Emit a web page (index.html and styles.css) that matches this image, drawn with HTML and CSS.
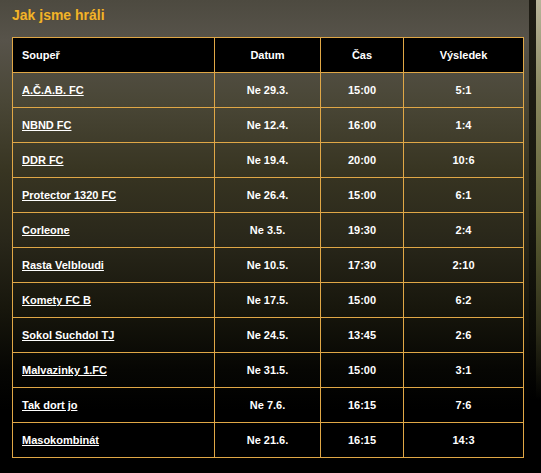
FILE: index.html
```html
<!DOCTYPE html>
<html lang="cs">
<head>
<meta charset="utf-8">
<title>Jak jsme hráli</title>
<link rel="stylesheet" href="styles.css">
</head>
<body>
<div class="page">
  <h2 class="title">Jak jsme hráli</h2>
  <table class="results">
    <colgroup>
      <col class="c-team"><col class="c-date"><col class="c-time"><col class="c-score">
    </colgroup>
    <thead>
      <tr><th class="left">Soupeř</th><th>Datum</th><th>Čas</th><th>Výsledek</th></tr>
    </thead>
    <tbody>
      <tr><td class="left"><a href="#">A.Č.A.B. FC</a></td><td>Ne 29.3.</td><td>15:00</td><td>5:1</td></tr>
      <tr><td class="left"><a href="#">NBND FC</a></td><td>Ne 12.4.</td><td>16:00</td><td>1:4</td></tr>
      <tr><td class="left"><a href="#">DDR FC</a></td><td>Ne 19.4.</td><td>20:00</td><td>10:6</td></tr>
      <tr><td class="left"><a href="#">Protector 1320 FC</a></td><td>Ne 26.4.</td><td>15:00</td><td>6:1</td></tr>
      <tr><td class="left"><a href="#">Corleone</a></td><td>Ne 3.5.</td><td>19:30</td><td>2:4</td></tr>
      <tr><td class="left"><a href="#">Rasta Velbloudi</a></td><td>Ne 10.5.</td><td>17:30</td><td>2:10</td></tr>
      <tr><td class="left"><a href="#">Komety FC B</a></td><td>Ne 17.5.</td><td>15:00</td><td>6:2</td></tr>
      <tr><td class="left"><a href="#">Sokol Suchdol TJ</a></td><td>Ne 24.5.</td><td>13:45</td><td>2:6</td></tr>
      <tr><td class="left"><a href="#">Malvazinky 1.FC</a></td><td>Ne 31.5.</td><td>15:00</td><td>3:1</td></tr>
      <tr><td class="left"><a href="#">Tak dort jo</a></td><td>Ne 7.6.</td><td>16:15</td><td>7:6</td></tr>
      <tr><td class="left"><a href="#">Masokombinát</a></td><td>Ne 21.6.</td><td>16:15</td><td>14:3</td></tr>
    </tbody>
  </table>
</div>
</body>
</html>
```
FILE: styles.css
```css
html, body {
  margin: 0;
  padding: 0;
  height: 100%;
}
body {
  font-family: "Liberation Sans", Arial, sans-serif;
  color: #fff;
  background:
    linear-gradient(to bottom, #b9b59b 0px, #8c8a62 90px, #5d5f34 220px, #2c2c18 330px, #000 400px) right top / 5px 100% no-repeat,
    linear-gradient(to bottom, #1e1c14 0px, #1a1a10 200px, #0c0c06 330px, #000 400px) right 5px top / 7px 100% no-repeat,
    linear-gradient(to bottom, #4d4a40 0px, #57534a 40px, #4a4737 100px, #383522 170px, #29271a 240px, #17160c 310px, #060603 370px, #000 410px);
  overflow: hidden;
}
.page {
  padding: 6px 0 0 12px;
}
.title {
  margin: 0 0 12px 0;
  font-size: 14px;
  font-weight: bold;
  line-height: 19px;
  color: #f2b42c;
  text-shadow: 0 0 1px rgba(120, 80, 0, 0.6);
}
.results {
  border-collapse: collapse;
  table-layout: fixed;
  width: 511px;
  border: 1px solid #e0a746;
  font-size: 11px;
  font-weight: bold;
}
.c-team { width: 202px; }
.c-date { width: 106px; }
.c-time { width: 83px; }
.c-score { width: 120px; }
.results th,
.results td {
  border: 1px solid #e0a746;
  padding: 0;
  text-align: center;
  vertical-align: middle;
  color: #fff;
}
.results th {
  height: 34px;
  background: #000;
}
.results td {
  height: 34px;
}
.results .left {
  text-align: left;
  padding-left: 9px;
}
.results a {
  color: #fff;
  text-decoration: underline;
}
```
